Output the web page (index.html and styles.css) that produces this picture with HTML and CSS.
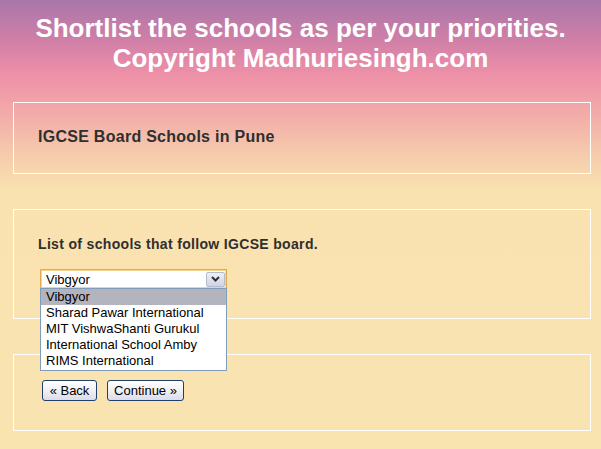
FILE: index.html
```html
<!DOCTYPE html>
<html lang="en">
<head>
<meta charset="utf-8">
<title>IGCSE Board Schools in Pune</title>
<link rel="stylesheet" href="styles.css">
</head>
<body>
<header class="hero">
  <h1 class="hero-title">Shortlist the schools as per your priorities.<br>Copyright Madhuriesingh.com</h1>
</header>
<main class="content">
  <section class="panel panel-title">
    <h2 class="board-heading">IGCSE Board Schools in Pune</h2>
  </section>
  <section class="panel panel-list">
    <p class="list-label">List of schools that follow IGCSE board.</p>
    <div class="combo">
      <div class="combo-field">
        <span class="combo-value">Vibgyor</span>
        <span class="combo-btn">
          <svg width="9" height="6" viewBox="0 0 9 6"><path d="M1 1 L4.5 4.5 L8 1" fill="none" stroke="#2b2f3a" stroke-width="2"/></svg>
        </span>
      </div>
      <ul class="combo-list">
        <li class="combo-item selected">Vibgyor</li>
        <li class="combo-item">Sharad Pawar International</li>
        <li class="combo-item">MIT VishwaShanti Gurukul</li>
        <li class="combo-item">International School Amby</li>
        <li class="combo-item">RIMS International</li>
      </ul>
    </div>
  </section>
  <section class="panel panel-actions">
    <button class="xp-btn btn-back" type="button">« Back</button>
    <button class="xp-btn btn-continue" type="button">Continue »</button>
  </section>
</main>
</body>
</html>
```
FILE: styles.css
```css
html {
  background: #f9e4b0;
}
body {
  margin: 0;
  min-height: 449px;
  font-family: "Liberation Sans", Arial, sans-serif;
  background: linear-gradient(to bottom,
    #a877a9 0px,
    #d07fa7 40px,
    #ee91a8 75px,
    #f3aca9 115px,
    #f5c8ac 150px,
    #f9e2b0 190px,
    #f9e4b0 449px);
}
.hero {
  padding-top: 13px;
  text-align: center;
}
.hero-title {
  margin: 0;
  font-size: 26px;
  line-height: 30px;
  font-weight: bold;
  color: #ffffff;
}
.content {
  display: flex;
  flex-direction: column;
  gap: 35px;
  margin: 29px 0 0 13px;
  width: 578px;
}
.panel {
  border: 1px solid #ffffff;
  box-sizing: border-box;
  padding-left: 24px;
}
.panel-title {
  height: 72px;
  padding-top: 24px;
}
.board-heading {
  margin: 0;
  font-size: 16px;
  line-height: 20px;
  font-weight: bold;
  letter-spacing: 0.27px;
  color: #2f2f2f;
}
.panel-list {
  height: 110px;
  padding-top: 25px;
}
.list-label {
  margin: 0;
  font-size: 14px;
  line-height: 18px;
  font-weight: bold;
  letter-spacing: 0.33px;
  color: #2f2f2f;
}
.combo {
  position: relative;
  margin: 16px 0 0 2px;
  width: 187px;
}
.combo-field {
  box-sizing: border-box;
  height: 20px;
  background: #ffffff;
  border: 1px solid #e0ac4c;
  box-shadow: inset 0 0 0 1px #f6d48e;
  display: flex;
  align-items: center;
  justify-content: space-between;
  padding: 0 1px 0 5px;
  font-size: 13px;
  color: #000;
}
.combo-btn {
  box-sizing: border-box;
  width: 19px;
  height: 15px;
  border: 1px solid #b5bccd;
  border-radius: 2px;
  background: linear-gradient(to bottom, #eef0f7, #d0d4e2);
  display: flex;
  align-items: center;
  justify-content: center;
}
.combo-list {
  position: absolute;
  left: 0;
  top: 19px;
  width: 187px;
  box-sizing: border-box;
  margin: 0;
  padding: 0 0 1px;
  list-style: none;
  background: #ffffff;
  border: 1px solid #7f9db9;
  z-index: 2;
}
.combo-item {
  height: 16px;
  line-height: 16px;
  padding-left: 5px;
  font-size: 13px;
  color: #000;
  white-space: nowrap;
}
.combo-item.selected {
  background: #b3b4bd;
}
.panel-actions {
  height: 77px;
  padding-top: 25px;
  padding-left: 28px;
  display: flex;
  align-items: flex-start;
  gap: 10px;
}
.xp-btn {
  box-sizing: border-box;
  height: 21px;
  padding: 0 6px;
  border: 1px solid #1f3f6e;
  border-radius: 3px;
  background: linear-gradient(to bottom, #ffffff 0%, #f2f2f6 45%, #dcdcea 100%);
  font-family: "Liberation Sans", Arial, sans-serif;
  font-size: 13px;
  color: #000;
  line-height: 17px;
}
.btn-back {
  width: 55px;
}
.btn-continue {
  width: 77px;
}
```
